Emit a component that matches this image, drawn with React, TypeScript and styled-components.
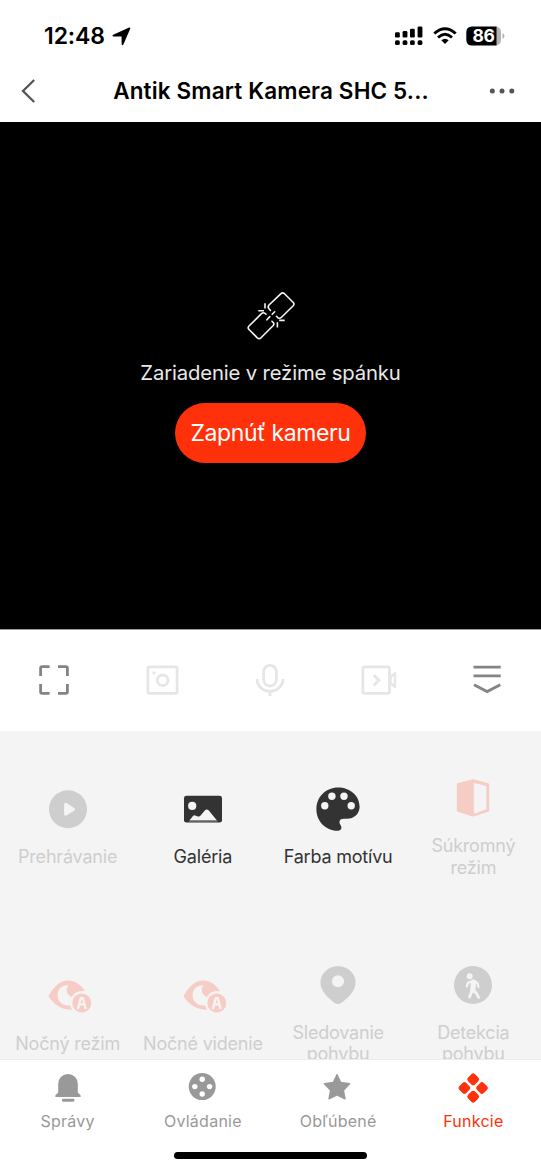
import React from "react";
import styled, { createGlobalStyle } from "styled-components";

const ACCENT = "#ff310a";
const FADED = "#cecece";
const FADED_ACCENT = "#f6cdc5";
const DARK = "#333333";
const PANEL = "#f4f4f4";

const GlobalStyle = createGlobalStyle`
  * { box-sizing: border-box; }
  body { margin: 0; background: #fff; }
  svg { display: block; flex: none; overflow: visible; }
  button { border: 0; background: none; padding: 0; font: inherit; color: inherit; }
`;

const Screen = styled.main`
  width: 541px;
  height: 1170px;
  display: flex;
  flex-direction: column;
  overflow: hidden;
  background: #fff;
  font-family: Inter, "Liberation Sans", sans-serif;
`;

const StatusBar = styled.div`
  flex: none;
  height: 60px;
  padding: 12px 36px 0 44px;
  display: flex;
  align-items: center;
  justify-content: space-between;
`;

const Cluster = styled.div<{ $gap: number }>`
  display: flex;
  align-items: center;
  gap: ${(p) => p.$gap}px;
`;

const Clock = styled.span`
  font-size: 23px;
  font-weight: 600;
  line-height: 28px;
  letter-spacing: -0.1px;
`;

const Header = styled.header`
  flex: none;
  height: 62px;
  padding: 0 25px 0 20px;
  display: grid;
  grid-template-columns: 36px 1fr 30px;
  align-items: center;
`;

const Title = styled.h1`
  margin: 0;
  font-size: 22.5px;
  font-weight: 600;
  line-height: 28px;
  letter-spacing: 0.15px;
  text-align: center;
  white-space: nowrap;
`;

const Video = styled.section`
  flex: none;
  height: 508px;
  padding-top: 163px;
  display: flex;
  flex-direction: column;
  align-items: center;
  background: #000;
  border-bottom: 1px solid #9a9a9a;
`;

const SleepText = styled.p`
  margin: 12px 0 16.4px;
  color: #e9e9e9;
  font-size: 20.3px;
  line-height: 28px;
  letter-spacing: -0.15px;
  white-space: nowrap;
`;

const PowerButton = styled.button`
  && {
    width: 191px;
    height: 59.4px;
    border-radius: 30px;
    background: ${ACCENT};
    color: #fff;
    font-size: 23px;
    letter-spacing: -0.4px;
    white-space: nowrap;
  }
`;

const Toolbar = styled.div`
  flex: none;
  height: 101px;
  padding-bottom: 2px;
  display: grid;
  grid-template-columns: repeat(5, 1fr);
  place-items: center;
`;

const Functions = styled.section`
  flex: 1;
  min-height: 0;
  overflow: hidden;
  padding-top: 3px;
  display: grid;
  grid-template-columns: repeat(4, 1fr);
  grid-auto-rows: 186.5px;
  align-content: start;
  background: ${PANEL};
`;

const FunctionCell = styled.button`
  display: flex;
  flex-direction: column;
  align-items: center;
  justify-content: center;
  gap: 15px;
`;

const FunctionLabel = styled.span<{ $dark?: boolean }>`
  color: ${(p) => (p.$dark ? DARK : FADED)};
  font-size: 18px;
  line-height: 21.5px;
  letter-spacing: -0.2px;
  text-align: center;
  white-space: pre-line;
`;

const TabBar = styled.nav`
  flex: none;
  height: 111px;
  border-top: 1px solid #ececec;
  display: grid;
  grid-template-columns: repeat(4, 1fr);
  grid-template-rows: 92px 7px;
`;

const Tab = styled.button<{ $active?: boolean }>`
  && {
    padding-top: 10px;
    display: flex;
    flex-direction: column;
    align-items: center;
    justify-content: flex-start;
    gap: 8px;
    color: ${(p) => (p.$active ? ACCENT : "#999999")};
    font-size: 16px;
    line-height: 20px;
    letter-spacing: 0.25px;
  }
`;

const HomeIndicator = styled.div`
  grid-column: 1 / -1;
  justify-self: center;
  width: 193px;
  height: 7px;
  border-radius: 4px;
  background: #000;
`;

const SignalIcon = () => (
  <svg width="28" height="20" viewBox="0 0 28 20">
    <rect x="0" y="6.2" width="4.8" height="5.4" rx="1.3" />
    <rect x="7.6" y="5" width="4.8" height="6.6" rx="1.3" />
    <rect x="15" y="2.8" width="4.8" height="8.8" rx="1.3" />
    <rect x="22.6" y="0.4" width="4.8" height="11.2" rx="1.3" />
    {[0, 7.6, 15, 22.6].map((x) => (
      <rect key={x} x={x} y="14.3" width="4.8" height="4.8" rx="1.6" />
    ))}
  </svg>
);

const WifiIcon = () => (
  <svg width="24" height="18" viewBox="0 0 24 18" fill="none" stroke="#000" strokeWidth="2.9">
    <path d="M1.3 6.5 Q12 -3.2 22.7 6.5" />
    <path d="M5 10.5 Q12 4.2 19 10.5" />
    <path d="M8.3 13.2 Q12 10.2 15.7 13.2 L12 17 Z" fill="#000" stroke="none" />
  </svg>
);

const BatteryIcon = () => (
  <svg width="39" height="20" viewBox="0 0 39 20">
    <path d="M30 0.5 h0 a6 6 0 0 1 5 6 v7 a6 6 0 0 1 -5 6 z" fill="#b3b3b3" />
    <path d="M6 0.5 H30.5 V19.5 H6 Q0.3 19.5 0.3 13.5 V6.5 Q0.3 0.5 6 0.5 Z" />
    <path d="M36.5 7 Q38.5 8 38.5 10 T36.5 13 Z" fill="#b3b3b3" />
    <text x="17.6" y="16.4" textAnchor="middle" fontSize="17.5" fontWeight="700" fill="#fff" letterSpacing="-0.2">
      86
    </text>
  </svg>
);

const LinkIcon = () => (
  <svg width="62" height="62" viewBox="0 0 62 62" fill="none" stroke="#f4f4f4" strokeWidth="1.6" strokeLinecap="round">
    <path d="M30.5 25.5 L29 23.7 Q27.3 21.7 29 20 L40.7 8.8 Q42.7 7 44.5 8.8 L53 17.2 Q55 19 53 21 L41.5 32.3 Q39.7 34 38 32.8 L36.5 31.3" />
    <path d="M26 29.3 L25 28.3 Q23.3 27 21.5 28.6 L9 41 Q7.3 42.8 9 44.5 L17.3 52.8 Q19.2 54.5 21 52.8 L33 40.7 Q34.5 39 33.3 37.5 L32 36.3" />
    <path d="M26.9 34.8 L29.8 31.6 M32.2 29.3 L34.7 26.8" />
    <path d="M25 18.3 V23.6 M18.3 25.7 H24 M37.4 37.2 V42.5 M39.2 35.4 H44.7" strokeLinecap="butt" />
  </svg>
);

const FullscreenIcon = () => (
  <svg width="30" height="30" viewBox="0 0 30 30" fill="none" stroke="#848484" strokeWidth="2.8">
    <path d="M1.6 11 V3.2 Q1.6 1.6 3.2 1.6 H10.6 M19 1.6 H26.8 Q28.4 1.6 28.4 3.2 V11 M28.4 19 V26.8 Q28.4 28.4 26.8 28.4 H19 M10.6 28.4 H3.2 Q1.6 28.4 1.6 26.8 V19" />
  </svg>
);

const SnapshotIcon = () => (
  <svg width="33" height="30" viewBox="0 0 33 30" fill="none" stroke="#e6e6e6" strokeWidth="2.8">
    <rect x="1.9" y="1.8" width="29.2" height="26.6" rx="1.6" />
    <circle cx="16.7" cy="15.3" r="5.3" />
    <circle cx="8" cy="7.8" r="1.6" fill="#e6e6e6" stroke="none" />
  </svg>
);

const MicIcon = () => (
  <svg width="30" height="34" viewBox="0 0 30 34" fill="none" stroke="#e6e6e6" strokeWidth="2.8">
    <rect x="8.6" y="2.4" width="12.8" height="20.6" rx="6.4" />
    <path d="M2 16 A13 12.2 0 0 0 28 16 M15 28 V33.3" />
  </svg>
);

const RecordIcon = () => (
  <svg width="36" height="30" viewBox="0 0 36 30" fill="none" stroke="#e6e6e6" strokeWidth="2.8">
    <rect x="1.9" y="1.8" width="26.6" height="26.6" rx="1.6" />
    <path d="M12.6 10 L17.9 15.2 L12.6 20.4" />
    <path d="M34 8.3 L29.5 12.2 V18 L34 22 Z" strokeWidth="2.4" strokeLinejoin="round" />
  </svg>
);

const CollapseIcon = () => (
  <svg width="28" height="30" viewBox="0 0 28 30" fill="none" stroke="#848484" strokeWidth="2.8">
    <path d="M0.5 2.2 H27.7 M0.5 10.8 H27.7 M1 19.7 L14.1 26.6 L27.3 19.7" />
  </svg>
);

const PlayIcon = () => (
  <svg width="44" height="44" viewBox="0 0 44 44">
    <circle cx="22" cy="22.3" r="19" fill={FADED} />
    <path d="M19.6 17.2 L27.5 22.2 L19.6 27.2 Z" fill={PANEL} stroke={PANEL} strokeWidth="3" strokeLinejoin="round" />
  </svg>
);

const GalleryIcon = () => (
  <svg width="44" height="44" viewBox="0 0 44 44">
    <rect x="3" y="8.8" width="38" height="26.8" rx="2.4" fill={DARK} />
    <circle cx="11.2" cy="18.9" r="4.1" fill={PANEL} />
    <path d="M8.4 33.6 L12.2 28.8 Q13.4 27.8 14.8 28.8 Q17.4 30.6 19.6 28.4 L23.8 23.4 Q25.8 21.6 27.8 23.6 L36 33.6 Z" fill={PANEL} />
    <path d="M8 34.2 H36.6" stroke="#777" strokeWidth="1" />
  </svg>
);

const PaletteIcon = () => (
  <svg width="44" height="44" viewBox="0 0 44 44">
    <path
      d="M22 0.6 C34 0.6 43.6 8.8 43.6 19.7 C43.6 26.7 38 31.8 31 31.8 H27.6 C23.6 31.8 22.6 34.8 24.4 37.8 C26.6 41.2 25 43.8 21.4 43.8 C9.6 43.4 0.4 34.2 0.4 22.2 C0.4 9.8 10 0.6 22 0.6 Z"
      fill={DARK}
    />
    <circle cx="8.8" cy="18.8" r="3.7" fill={PANEL} />
    <circle cx="15.9" cy="9.2" r="3.7" fill={PANEL} />
    <circle cx="28" cy="9.2" r="3.7" fill={PANEL} />
    <circle cx="35.2" cy="18.8" r="3.7" fill={PANEL} />
  </svg>
);

const PrivacyIcon = () => (
  <svg width="44" height="44" viewBox="0 0 44 44" strokeLinejoin="round">
    <path d="M22 4.3 L37 8.5 V34.5 L22 39.4 L7 34.5 V8.5 Z" fill={FADED_ACCENT} stroke={FADED_ACCENT} strokeWidth="2.4" />
    <path d="M23.3 7.6 L34.9 10.4 V33 L23.3 37.2 Z" fill={PANEL} stroke={PANEL} strokeWidth="1" />
  </svg>
);

const NightEyeIcon = () => (
  <svg width="44" height="44" viewBox="0 0 44 44">
    <path
      d="M2.8 21.5 C8 12.5 14.5 6.6 22 6.6 C29 6.6 34.5 10.6 39 17 Q26.6 16 25 27.5 Q25 31.5 26 35.6 C14.5 36.2 7.6 29.5 2.8 22.8 Q2.4 22.1 2.8 21.5 Z"
      fill={FADED_ACCENT}
    />
    <path d="M22.6 11.2 C15.4 10.8 11.6 15.6 11.6 21.2 C11.6 27.6 17 32.6 24.8 31.2 L25.6 23 C20.4 20.2 19.2 15.2 22.6 11.2 Z" fill={PANEL} />
    <circle cx="35.8" cy="29" r="11.8" fill={PANEL} />
    <circle cx="35.8" cy="29" r="9.5" fill={FADED_ACCENT} />
    <path d="M32.1 34.2 L34.7 24.2 H36.9 L39.5 34.2 M33.2 30.4 H38.4" fill="none" stroke={PANEL} strokeWidth="2.3" strokeLinejoin="round" strokeLinecap="round" />
  </svg>
);

const PinIcon = () => (
  <svg width="44" height="44" viewBox="0 0 44 44">
    <path d="M22 3.2 C31.8 3.2 39.6 10.4 39.6 19.6 C39.6 28.6 31 35.6 25.4 40 Q22 42.2 18.6 40 C13 35.6 4.4 28.6 4.4 19.6 C4.4 10.4 12.2 3.2 22 3.2 Z" fill={FADED} />
    <circle cx="22" cy="18.3" r="6" fill={PANEL} />
  </svg>
);

const MotionIcon = () => (
  <svg width="44" height="44" viewBox="0 0 44 44">
    <circle cx="22" cy="22" r="19" fill={FADED} />
    <circle cx="18.7" cy="13.2" r="3" fill={PANEL} />
    <g fill="none" stroke={PANEL} strokeLinecap="round" strokeLinejoin="round">
      <path d="M22.4 19 L21.8 27.5" strokeWidth="5.2" />
      <path d="M21.4 18 L17 19.7 L15.8 23.3 M23.5 18 L26.6 20.4 L27.4 23.8" strokeWidth="2.3" />
      <path d="M20.8 28 L18.5 34 M23.2 27.8 L25.4 30.4 L27.6 34.4" strokeWidth="2.8" />
    </g>
  </svg>
);

const BellIcon = () => (
  <svg width="32" height="33" viewBox="0 0 32 33" fill="currentColor">
    <path d="M6.2 13.8 A9.8 9.8 0 0 1 25.8 13.8 V22 Q26.2 23.6 28 24.4 Q29 25 28.6 27 H3.4 Q3 25 4 24.4 Q5.8 23.6 6.2 22 Z" />
    <rect x="10" y="28.8" width="12.4" height="3" rx="1.2" />
  </svg>
);

const ControlIcon = () => (
  <svg width="32" height="33" viewBox="0 0 32 33">
    <circle cx="15.2" cy="16.6" r="13.5" fill="currentColor" />
    {[[15.2, 9.2], [15.2, 24], [7.8, 16.6], [22.6, 16.6]].map(([x, y]) => (
      <circle key={`${x}-${y}`} cx={x} cy={y} r="2.7" fill="#fff" />
    ))}
  </svg>
);

const StarIcon = () => (
  <svg width="32" height="33" viewBox="0 0 32 33" fill="currentColor" stroke="currentColor" strokeWidth="1.4" strokeLinejoin="round">
    <path d="M15 4.7 L18.6 12.4 L27.6 13.8 L21.4 20.2 L23 28.8 L15 24.8 L7 28.8 L8.6 20.2 L2.4 13.8 L11.4 12.4 Z" />
  </svg>
);

const FunctionsIcon = () => (
  <svg width="32" height="33" viewBox="0 0 32 33" fill="currentColor">
    {[[16.2, 9.3], [16.2, 26.7], [7.4, 18], [25, 18]].map(([x, y]) => (
      <rect key={`${x}-${y}`} x={x - 4.9} y={y - 4.9} width="9.8" height="9.8" rx="2.6" transform={`rotate(45 ${x} ${y})`} />
    ))}
  </svg>
);

const functions = [
  { label: "Prehrávanie", icon: <PlayIcon /> },
  { label: "Galéria", icon: <GalleryIcon />, dark: true },
  { label: "Farba motívu", icon: <PaletteIcon />, dark: true },
  { label: "Súkromný\nrežim", icon: <PrivacyIcon /> },
  { label: "Nočný režim", icon: <NightEyeIcon /> },
  { label: "Nočné videnie", icon: <NightEyeIcon /> },
  { label: "Sledovanie\npohybu", icon: <PinIcon /> },
  { label: "Detekcia\npohybu", icon: <MotionIcon /> },
];

const tabs = [
  { label: "Správy", icon: <BellIcon /> },
  { label: "Ovládanie", icon: <ControlIcon /> },
  { label: "Obľúbené", icon: <StarIcon /> },
  { label: "Funkcie", icon: <FunctionsIcon />, active: true },
];

export default function App() {
  return (
    <>
      <GlobalStyle />
      <Screen>
        <StatusBar>
          <Cluster $gap={7.5}>
            <Clock>12:48</Clock>
            <svg width="19" height="19" viewBox="0 0 19 19">
              <path d="M17.2 0.4 Q18.8 0.2 18.2 1.8 L11.4 17.4 Q10.2 19.2 9.6 17 V9.6 H1.6 Q-0.4 9 1.2 7.7 Z" />
            </svg>
          </Cluster>
          <Cluster $gap={9.3}>
            <SignalIcon />
            <WifiIcon />
            <BatteryIcon />
          </Cluster>
        </StatusBar>
        <Header>
          <svg width="16" height="24" viewBox="0 0 16 24" fill="none" stroke="#555" strokeWidth="2.3">
            <path d="M14.2 1 L3 12 L14.2 23" />
          </svg>
          <Title>Antik Smart Kamera SHC 5...</Title>
          <svg width="30" height="6" viewBox="0 0 30 6" fill="#555">
            <circle cx="6.3" cy="3" r="2.5" />
            <circle cx="16" cy="3" r="2.5" />
            <circle cx="25.8" cy="3" r="2.5" />
          </svg>
        </Header>
        <Video>
          <LinkIcon />
          <SleepText>Zariadenie v režime spánku</SleepText>
          <PowerButton>Zapnúť kameru</PowerButton>
        </Video>
        <Toolbar>
          <FullscreenIcon />
          <SnapshotIcon />
          <MicIcon />
          <RecordIcon />
          <CollapseIcon />
        </Toolbar>
        <Functions>
          {functions.map((f) => (
            <FunctionCell key={f.label}>
              {f.icon}
              <FunctionLabel $dark={f.dark}>{f.label}</FunctionLabel>
            </FunctionCell>
          ))}
        </Functions>
        <TabBar>
          {tabs.map((t) => (
            <Tab key={t.label} $active={t.active}>
              {t.icon}
              {t.label}
            </Tab>
          ))}
          <HomeIndicator />
        </TabBar>
      </Screen>
    </>
  );
}
